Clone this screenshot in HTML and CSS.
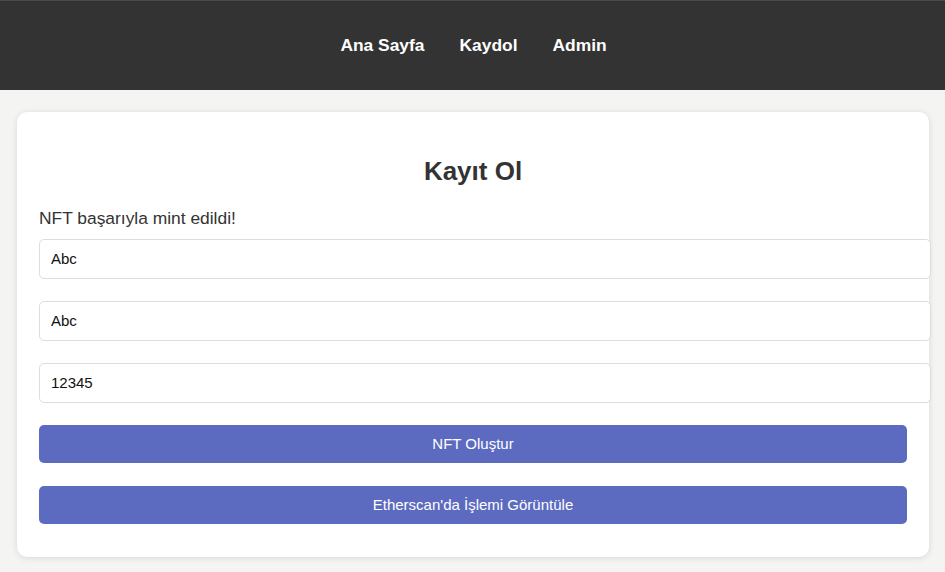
FILE: index.html
```html
<!DOCTYPE html>
<html lang="tr">
<head>
<meta charset="utf-8">
<title>Kayıt Ol</title>
<link rel="stylesheet" href="styles.css">
</head>
<body>
<header class="topbar">
  <nav class="nav">
    <a class="nav-link" href="#">Ana Sayfa</a>
    <a class="nav-link" href="#">Kaydol</a>
    <a class="nav-link" href="#">Admin</a>
  </nav>
</header>
<main class="page">
  <section class="card">
    <h2 class="title">Kayıt Ol</h2>
    <p class="message">NFT başarıyla mint edildi!</p>
    <input class="field" type="text" value="Abc">
    <input class="field" type="text" value="Abc">
    <input class="field" type="text" value="12345">
    <button class="btn btn-first" type="button">NFT Oluştur</button>
    <button class="btn" type="button">Etherscan'da İşlemi Görüntüle</button>
  </section>
</main>
</body>
</html>
```

FILE: styles.css
```css
* { box-sizing: content-box; }
html, body {
  margin: 0;
  padding: 0;
}
body {
  background: #f4f4f2;
  font-family: "Liberation Sans", Arial, sans-serif;
  color: #333;
}
.topbar {
  height: 89px;
  background: #333;
  border-top: 1px solid #4a4a4a;
  display: flex;
  align-items: center;
  justify-content: center;
}
.nav {
  display: flex;
  gap: 35px;
  padding-left: 2px;
}
.nav-link {
  color: #fff;
  text-decoration: none;
  font-weight: bold;
  font-size: 17.4px;
}
.page {
  padding: 22px 16px 15px 17px;
}
.card {
  background: #fff;
  border-radius: 10px;
  box-shadow: 0 1px 6px rgba(0,0,0,0.12);
  padding: 20px 22px 33px 22px;
}
.title {
  margin: 23px 0 21px;
  text-align: center;
  font-size: 26px;
  line-height: 32px;
  font-weight: bold;
  color: #333;
}
.message {
  margin: 0 0 10px;
  font-size: 17.4px;
  line-height: 21px;
  color: #333;
}
.field {
  display: block;
  width: 100%;
  padding: 10px 11px;
  margin: 0 0 22px;
  border: 1px solid #ddd;
  border-radius: 5px;
  font-family: "Liberation Sans", Arial, sans-serif;
  font-size: 15px;
  line-height: 18px;
  color: #111;
  background: #fff;
}
.btn {
  display: block;
  width: 100%;
  padding: 10px 0;
  border: none;
  border-radius: 5px;
  background: #5c6bc0;
  color: #fff;
  font-family: "Liberation Sans", Arial, sans-serif;
  font-size: 15px;
  line-height: 18px;
  text-align: center;
  cursor: pointer;
}
.btn-first {
  margin-bottom: 23px;
}
```
